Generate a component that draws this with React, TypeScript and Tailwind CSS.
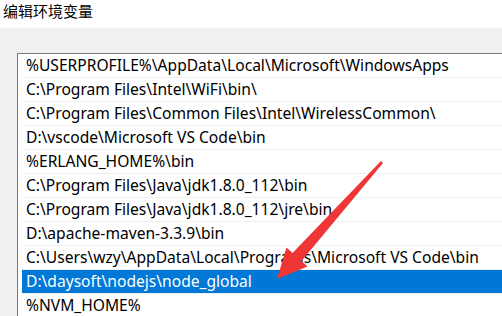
const paths: string[] = [
  "%USERPROFILE%\\AppData\\Local\\Microsoft\\WindowsApps",
  "C:\\Program Files\\Intel\\WiFi\\bin\\",
  "C:\\Program Files\\Common Files\\Intel\\WirelessCommon\\",
  "D:\\vscode\\Microsoft VS Code\\bin",
  "%ERLANG_HOME%\\bin",
  "C:\\Program Files\\Java\\jdk1.8.0_112\\bin",
  "C:\\Program Files\\Java\\jdk1.8.0_112\\jre\\bin",
  "D:\\apache-maven-3.3.9\\bin",
  "C:\\Users\\wzy\\AppData\\Local\\Programs\\Microsoft VS Code\\bin",
  "D:\\daysoft\\nodejs\\node_global",
  "%NVM_HOME%",
];

const selected = 9;

export default function App() {
  return (
    <div
      className="relative w-[502px] h-[316px] overflow-hidden bg-[#f0f0f0] text-black"
      style={{ fontFamily: '"Noto Sans", "Noto Sans CJK SC", sans-serif' }}
    >
      {/* title strip */}
      <div className="h-[28px] bg-white flex items-center pl-[3px] pb-[5px]">
        <span className="text-[15px] leading-none">编辑环境变量</span>
      </div>

      {/* list box */}
      <div className="pt-[25px] pl-[17px]">
        <div className="border-l border-t border-[#7a7a7a] bg-white h-[300px]">
          {paths.map((p, i) => (
            <div
              key={i}
              className={`ml-[4px] h-[24px] flex items-center pl-[4px] pt-[1px] border-b border-[#efefef] text-[15.6px] whitespace-nowrap ${
                i === selected ? "bg-[#0078d7] text-white" : ""
              }`}
            >
              {p}
            </div>
          ))}
        </div>
      </div>

      {/* red annotation arrow */}
      <svg
        className="absolute left-0 top-0 pointer-events-none"
        width="502"
        height="316"
        viewBox="0 0 502 316"
      >
        <polygon
          points="381,161 383,163 301.5,261 307.5,266.5 277,279 286.5,247.5 292.5,253"
          fill="#ef3636"
        />
      </svg>
    </div>
  );
}
